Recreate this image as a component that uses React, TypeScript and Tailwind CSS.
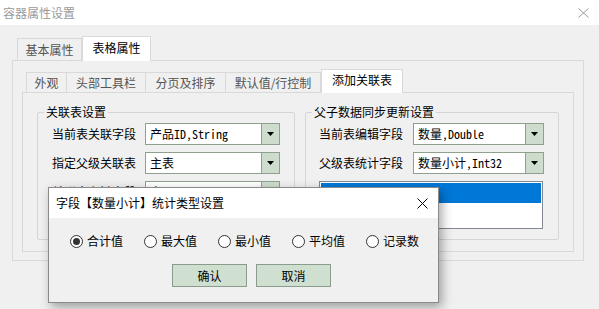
import React from "react";

const CJK = { fontFamily: '"Noto Sans CJK SC", "Noto Sans", sans-serif' };
const MONO = { fontFamily: '"Noto Sans Mono CJK SC", "Noto Sans CJK SC", "Liberation Mono", monospace' };

function Combo({ text, width }: { text: string; width: string }) {
  return (
    <div className={`${width} h-[22px] flex bg-white border border-[#8fa08f]`}>
      <div className="flex-1 flex items-center pl-[4px] text-[12px] leading-[14px] text-black overflow-hidden whitespace-nowrap" style={MONO}>
        {text}
      </div>
      <div className="w-[18px] border-l border-[#8fa08f] bg-[#cddccd] flex items-center justify-center">
        <svg width="7" height="4" viewBox="0 0 7 4"><path d="M0 0H7L3.5 4Z" fill="#000" /></svg>
      </div>
    </div>
  );
}

function Row({ label, labelW, text, comboW }: { label: string; labelW: string; text: string; comboW: string }) {
  return (
    <div className="flex items-center h-[22px]">
      <div className={`${labelW} text-[12px] leading-[14px] text-black`}>{label}</div>
      <Combo text={text} width={comboW} />
    </div>
  );
}

function Radio({ label, checked }: { label: string; checked?: boolean }) {
  return (
    <div className="flex items-center gap-[4px] w-[53px]">
      <div className="w-[13px] h-[13px] rounded-full border border-[#333] bg-white flex items-center justify-center shrink-0">
        {checked && <div className="w-[7px] h-[7px] rounded-full bg-[#333]" />}
      </div>
      <span className="text-[12px] leading-[14px] text-black whitespace-nowrap">{label}</span>
    </div>
  );
}

export default function App() {
  return (
    <div className="w-[599px] h-[309px] relative overflow-hidden bg-[#f0f0f0] flex flex-col" style={CJK}>
      {/* title bar */}
      <div className="h-[25px] bg-white flex items-center justify-between shrink-0">
        <span className="pl-[3px] text-[12px] leading-[14px] text-[#9a9a9a]">容器属性设置</span>
        <svg className="mr-[10px]" width="11" height="10" viewBox="0 0 11 10">
          <path d="M0.5 0.5L10.5 9.5M10.5 0.5L0.5 9.5" stroke="#9a9a9a" strokeWidth="1" />
        </svg>
      </div>

      <div className="pl-[12px] pt-[11px]">
        {/* outer tabs */}
        <div className="flex items-end h-[24px] pl-[5px]">
          <div className="h-[22px] w-[65px] border border-b-0 border-[#d9d9d9] bg-[#f0f0f0] flex items-center justify-center text-[12px] leading-[14px] text-[#555]">
            基本属性
          </div>
          <div className="relative z-10 h-[25px] mb-[-1px] w-[69px] border border-b-0 border-[#d9d9d9] bg-white flex items-start pt-[4px] justify-center text-[12px] leading-[14px] text-black">
            表格属性
          </div>
        </div>

        {/* outer panel */}
        <div className="w-[572px] h-[201px] border border-[#d9d9d9] bg-[#f0f0f0] pl-[9px] pt-[8px]">
          {/* inner tabs */}
          <div className="flex items-end h-[23px] pl-[4px]">
            <div className="h-[20px] w-[41px] border border-b-0 border-[#d9d9d9] flex items-center justify-center text-[12px] leading-[14px] text-[#555]">外观</div>
            <div className="h-[20px] w-[79px] border border-b-0 border-l-0 border-[#d9d9d9] flex items-center justify-center text-[12px] leading-[14px] text-[#555]">头部工具栏</div>
            <div className="h-[20px] w-[80px] border border-b-0 border-l-0 border-[#d9d9d9] flex items-center justify-center text-[12px] leading-[14px] text-[#555]">分页及排序</div>
            <div className="h-[20px] w-[95px] border border-b-0 border-l-0 border-[#d9d9d9] flex items-center justify-center text-[12px] leading-[14px] text-[#555]">默认值/行控制</div>
            <div className="relative z-10 h-[24px] mb-[-1px] w-[82px] border border-b-0 border-[#d9d9d9] bg-white flex items-start pt-[3px] justify-center text-[12px] leading-[14px] text-black">添加关联表</div>
          </div>

          {/* inner panel */}
          <div className="w-[552px] h-[160px] border border-[#d9d9d9] bg-[#f0f0f0] pl-[14px] pt-[12px] flex gap-[10px]">
            <fieldset className="w-[256px] h-[135px] border border-[#d5d5d5] rounded-[2px] px-[14px] m-0">
              <legend className="ml-[-8px] px-[2px] text-[12px] leading-[14px] text-black">关联表设置</legend>
              <div className="flex flex-col gap-[7px] pt-[4px]">
                <Row label="当前表关联字段" labelW="w-[93px]" text="产品ID,String" comboW="w-[135px]" />
                <Row label="指定父级关联表" labelW="w-[93px]" text="主表" comboW="w-[135px]" />
                <Row label="关联表主键字段" labelW="w-[93px]" text="产品ID,String" comboW="w-[135px]" />
              </div>
            </fieldset>
            <fieldset className="w-[254px] h-[135px] border border-[#d5d5d5] rounded-[2px] px-[13px] m-0">
              <legend className="ml-[-7px] px-[2px] text-[12px] leading-[14px] text-black">父子数据同步更新设置</legend>
              <div className="flex flex-col gap-[7px] pt-[4px]">
                <Row label="当前表编辑字段" labelW="w-[94px]" text="数量,Double" comboW="w-[131px]" />
                <Row label="父级表统计字段" labelW="w-[94px]" text="数量小计,Int32" comboW="w-[131px]" />
                <div className="w-[224px] h-[48px] border border-[#828790] bg-white p-[1px]">
                  <div className="h-[20px] bg-[#0078d7] text-white text-[12px] leading-[14px] flex items-center pl-[2px]">数量小计</div>
                </div>
              </div>
            </fieldset>
          </div>
        </div>
      </div>

      {/* modal dialog */}
      <div className="absolute left-[48px] top-[187px] w-[391px] h-[116px] border border-[#8a8a8a] bg-[#f0f0f0] shadow-[3px_4px_10px_rgba(0,0,0,0.35)] flex flex-col">
        <div className="h-[30px] bg-white flex items-center justify-between shrink-0">
          <span className="pl-[7px] text-[12px] leading-[14px] text-black">字段【数量小计】统计类型设置</span>
          <svg className="mr-[10px]" width="11" height="11" viewBox="0 0 11 11">
            <path d="M0.5 0.5L10.5 10.5M10.5 0.5L0.5 10.5" stroke="#000" strokeWidth="1" />
          </svg>
        </div>
        <div className="flex items-center gap-[21px] pl-[21px] pt-[15px] h-[31px]">
          <Radio label="合计值" checked />
          <Radio label="最大值" />
          <Radio label="最小值" />
          <Radio label="平均值" />
          <Radio label="记录数" />
        </div>
        <div className="flex gap-[9px] pl-[123px] mt-[15px]">
          <div className="w-[75px] h-[23px] border border-[#8c9c8c] bg-[#d0e0d0] flex items-center justify-center text-[12px] leading-[14px] text-black">确认</div>
          <div className="w-[75px] h-[23px] border border-[#8c9c8c] bg-[#d0e0d0] flex items-center justify-center text-[12px] leading-[14px] text-black">取消</div>
        </div>
      </div>
    </div>
  );
}
